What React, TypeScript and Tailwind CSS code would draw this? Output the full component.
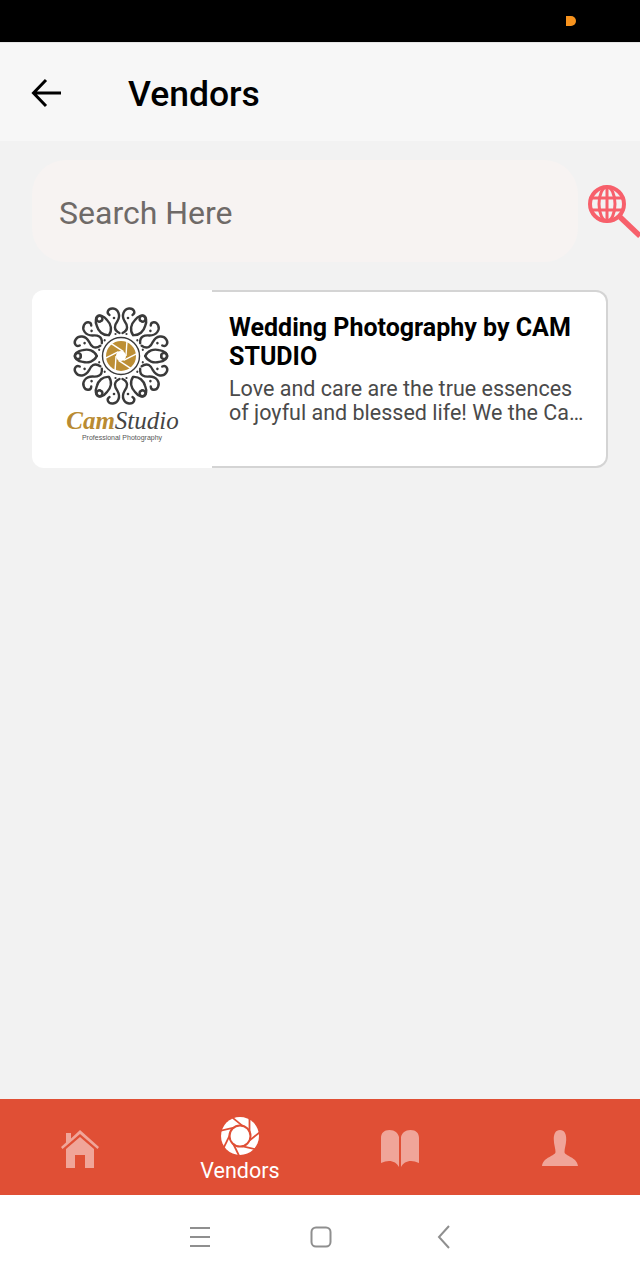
import React from 'react';

const ROBOTO = { fontFamily: 'Roboto, sans-serif' };

const Mandala: React.FC = () => {
  const angles = [0, 60, 120, 180, 240, 300];
  const blades = [0, 60, 120, 180, 240, 300];
  return (
    <svg width="100" height="100" viewBox="-50 -50 100 100" fill="none">
      {angles.map((a) => (
        <g key={a} transform={`rotate(${a})`} stroke="#3a3a3a" strokeWidth="2.4" strokeLinecap="round">
          {[1, -1].map((side) => (
            <g key={side} transform={`scale(${side} 1)`}>
              <path d="M1.500 -23 C8 -26 6.500 -31 3.500 -35 C0 -41 3 -47 8 -47.500 C13 -48 15 -43 11.500 -41" />
              <path d="M12 -21 C8.500 -26 10 -32 14 -36 C17 -40 22 -42 24 -39 C26 -36 22 -33 20 -35" />
              <circle cx="7" cy="-38" r="1.300" fill="#3a3a3a" stroke="none" />
              <circle cx="5.500" cy="-22" r="1.100" fill="#3a3a3a" stroke="none" />
            </g>
          ))}
        </g>
      ))}
      <circle r="18.500" stroke="#3a3a3a" strokeWidth="1.400" />
      <circle r="15" fill="#bd8f35" />
      <circle r="5" fill="#ffffff" />
      {blades.map((a) => (
        <line key={a} transform={`rotate(${a})`} x1="5" y1="0" x2="6" y2="-15.500" stroke="#ffffff" strokeWidth="1.400" />
      ))}
    </svg>
  );
};

const CamLogo: React.FC = () => (
  <div className="flex flex-col items-center w-[180px] shrink-0 bg-white rounded-l-xl pt-[16px]">
    <div className="-ml-[2px]">
      <Mandala />
    </div>
    <div className="flex items-baseline leading-none italic mt-[2px] ml-[1px] text-[25px]" style={{ fontFamily: '"Liberation Serif", serif' }}>
      <span className="font-bold text-[#b98b32]">Cam</span>
      <span className="text-[#444444]">Studio</span>
    </div>
    <div className="text-[7px] leading-none text-[#555555] mt-[1px]" style={{ fontFamily: '"Liberation Sans", sans-serif' }}>
      Professional Photography
    </div>
  </div>
);

const GlobeSearch: React.FC = () => (
  <svg width="52" height="54" viewBox="0 0 52 54" fill="none" stroke="#f7606b" className="shrink-0">
    <circle cx="19" cy="19" r="17" strokeWidth="4" />
    <ellipse cx="19" cy="19" rx="8" ry="17" strokeWidth="3" />
    <path d="M4 13H34M4 25H34" strokeWidth="3" />
    <path d="M19 2V36" strokeWidth="3" />
    <path d="M32 32L52 51" strokeWidth="5.500" />
  </svg>
);

const HomeIcon: React.FC = () => (
  <svg width="38" height="38" viewBox="0 0 38 38" fill="#f0a599">
    <path d="M19 0L38 17L36.500 19L19 4L1.500 19L0 17L5 12.500V3H10V8.500Z" />
    <path d="M19 7L33 19V38H24V25H14V38H5V19Z" />
  </svg>
);

const ApertureIcon: React.FC = () => {
  const lines = [0, 51, 103, 154, 206, 257, 309];
  return (
    <svg width="38" height="38" viewBox="-19 -19 38 38">
      <circle r="19" fill="#ffffff" />
      <circle r="10.500" fill="none" stroke="#e04f35" strokeWidth="2" />
      {lines.map((a) => (
        <line key={a} transform={`rotate(${a})`} x1="9.500" y1="-4" x2="9.500" y2="-19" stroke="#e04f35" strokeWidth="1.800" />
      ))}
    </svg>
  );
};

const BookIcon: React.FC = () => (
  <svg width="38" height="38" viewBox="0 0 38 38" fill="#f0a599">
    <path d="M0 8C0 3 3 0 8.500 0C14 0 17 3 18 7V37C15 31 8 29 0 33Z" />
    <path d="M38 8C38 3 35 0 29.500 0C24 0 21 3 20 7V37C23 31 30 29 38 33Z" />
  </svg>
);

const PersonIcon: React.FC = () => (
  <svg width="38" height="38" viewBox="0 0 38 38" fill="#f0a599">
    <path d="M19 0C23.500 0 25.500 4 25.200 10C25 15 23.500 18 23.500 22C23.500 26 36 27 37 36H1C2 27 14.500 26 14.500 22C14.500 18 13 15 12.800 10C12.500 4 14.500 0 19 0Z" />
  </svg>
);

export default function App() {
  return (
    <div className="flex flex-col w-[640px] h-[1280px] bg-[#f2f2f2]" style={ROBOTO}>
      <div className="flex items-center justify-end h-[42px] bg-black pr-[64px] shrink-0">
        <div className="w-[10px] h-[10px] bg-[#f7931e] rounded-r-full" />
      </div>

      <header className="flex items-center h-[99px] bg-[#f7f7f7] border-t border-[#e5e5e5] shrink-0">
        <svg width="32" height="30" viewBox="0 0 32 30" fill="none" stroke="#000000" strokeWidth="3" className="ml-[31px] mt-[1px]">
          <path d="M30 15H3M15 2L2.500 15L15 28" />
        </svg>
        <h1 className="ml-[65px] mt-[5px] text-[35.500px] font-medium text-black leading-none">Vendors</h1>
      </header>

      <main className="flex-1 px-[32px] pt-[19px]">
        <div className="flex items-center w-[608px]">
          <div className="flex items-center w-[546px] h-[102px] rounded-[34px] bg-[#f7f3f2] pl-[27px]">
            <span className="text-[32px] text-[#6f6a68] mt-[3px]">Search Here</span>
          </div>
          <div className="ml-[10px] mt-[2px]">
            <GlobeSearch />
          </div>
        </div>

        <div className="flex w-[576px] h-[178px] mt-[28px]">
          <CamLogo />
          <div className="flex-1 bg-white rounded-r-xl border-y-2 border-r-2 border-[#d4d4d4] pl-[17px] pr-[16px] pt-[21px]">
            <h2 className="text-[25px] leading-[29px] font-bold text-black">Wedding Photography by CAM STUDIO</h2>
            <p className="text-[21.500px] leading-[24px] text-[#4a4a4a] mt-[6px] whitespace-nowrap">
              Love and care are the true essences
              <br />
              of joyful and blessed life! We the Ca…
            </p>
          </div>
        </div>
      </main>

      <nav className="grid grid-cols-4 h-[96px] bg-[#e04f35] shrink-0">
        <div className="flex items-center justify-center pt-[3px]">
          <HomeIcon />
        </div>
        <div className="flex flex-col items-center pt-[18px]">
          <ApertureIcon />
          <span className="text-[21.500px] leading-[24px] text-white mt-[4px]">Vendors</span>
        </div>
        <div className="flex items-center justify-center pt-[3px]">
          <BookIcon />
        </div>
        <div className="flex items-center justify-center pt-[3px]">
          <PersonIcon />
        </div>
      </nav>

      <div className="flex items-center justify-center h-[85px] bg-white shrink-0 pb-[1px]">
        <svg width="22" height="22" viewBox="0 0 22 22" stroke="#8f8f8f" strokeWidth="2" className="-ml-[1px]">
          <path d="M1 2H21M1 11H21M1 20H21" />
        </svg>
        <svg width="22" height="22" viewBox="0 0 22 22" fill="none" stroke="#8f8f8f" strokeWidth="2" className="ml-[99px]">
          <rect x="1.500" y="1.500" width="19" height="19" rx="4.500" />
        </svg>
        <svg width="14" height="24" viewBox="0 0 14 24" fill="none" stroke="#8f8f8f" strokeWidth="2" className="ml-[105px]">
          <path d="M12 1L2 12L12 23" />
        </svg>
      </div>
    </div>
  );
}
